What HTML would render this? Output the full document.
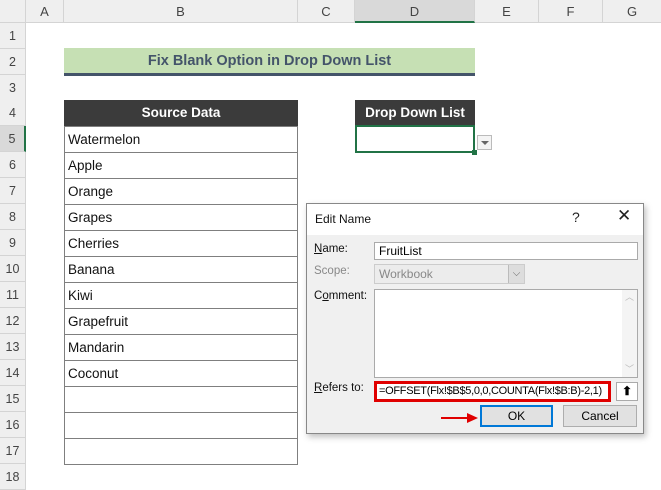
<!DOCTYPE html>
<html><head><meta charset="utf-8"><style>
*{box-sizing:border-box;margin:0;padding:0}
body{width:661px;height:490px;overflow:hidden;background:#fff;font-family:"Liberation Sans",sans-serif;position:relative}
.a{position:absolute}
.ch{top:0;height:23px;background:#efefef;border-right:1px solid #d4d4d4;border-bottom:1px solid #d4d4d4;font-size:13px;color:#444;text-align:center;line-height:23px}
.rh{left:0;width:26px;height:26px;background:#efefef;border-bottom:1px solid #d4d4d4;border-right:1px solid #d4d4d4;font-size:12.5px;color:#444;text-align:center;line-height:26px}
.cell{left:64px;width:234px;height:27px;border:1px solid #7f7f7f;font-size:13.5px;line-height:25px;padding-left:3px;color:#111}
.lbl{font-size:11.5px;color:#111}
.inp{background:#fff;border:1px solid #aaa;font-size:12px;padding-left:4px}
.btn{background:#e1e1e1;border:1px solid #adadad;font-size:12px;text-align:center}
</style></head><body>
<div class="a ch" style="left:0;width:26px"></div>
<div class="a ch" style="left:26px;width:38px">A</div>
<div class="a ch" style="left:64px;width:234px">B</div>
<div class="a ch" style="left:298px;width:57px">C</div>
<div class="a ch" style="left:355px;width:120px;background:#d9d9d9;border-bottom:2px solid #217346">D</div>
<div class="a ch" style="left:475px;width:64px">E</div>
<div class="a ch" style="left:539px;width:64px">F</div>
<div class="a ch" style="left:603px;width:58px;border-right:none">G</div>
<div class="a rh" style="top:23px">1</div>
<div class="a rh" style="top:49px">2</div>
<div class="a rh" style="top:75px">3</div>
<div class="a rh" style="top:100px">4</div>
<div class="a rh" style="top:126px;background:#d9d9d9;border-right:2px solid #217346">5</div>
<div class="a rh" style="top:152px">6</div>
<div class="a rh" style="top:178px">7</div>
<div class="a rh" style="top:204px">8</div>
<div class="a rh" style="top:230px">9</div>
<div class="a rh" style="top:256px">10</div>
<div class="a rh" style="top:282px">11</div>
<div class="a rh" style="top:308px">12</div>
<div class="a rh" style="top:334px">13</div>
<div class="a rh" style="top:360px">14</div>
<div class="a rh" style="top:386px">15</div>
<div class="a rh" style="top:412px">16</div>
<div class="a rh" style="top:438px">17</div>
<div class="a rh" style="top:464px">18</div>

<div class="a" style="left:64px;top:48px;width:411px;height:28px;background:#c6e0b4;border-bottom:3px solid #44546a;color:#44546a;font-weight:bold;font-size:14.5px;text-align:center;line-height:26px">Fix Blank Option in Drop Down List</div>

<div class="a" style="left:64px;top:100px;width:234px;height:26px;background:#3b3b3b;color:#fff;font-weight:bold;font-size:13.5px;text-align:center;line-height:26px">Source Data</div>
<div class="a" style="left:355px;top:100px;width:120px;height:26px;background:#3b3b3b;color:#fff;font-weight:bold;font-size:13.5px;text-align:center;line-height:26px">Drop Down List</div>
<div class="a" style="left:355px;top:125px;width:120px;height:28px;border:2px solid #217346"></div>
<div class="a" style="left:472px;top:150px;width:5px;height:5px;background:#217346"></div>
<div class="a" style="left:477px;top:135px;width:15px;height:15px;border:1px solid #bbb;background:#f4f4f4"><div class="a" style="left:3px;top:5px;width:0;height:0;border-left:4px solid transparent;border-right:4px solid transparent;border-top:4px solid #666"></div></div>

<div class="a cell" style="top:126px">Watermelon</div>
<div class="a cell" style="top:152px">Apple</div>
<div class="a cell" style="top:178px">Orange</div>
<div class="a cell" style="top:204px">Grapes</div>
<div class="a cell" style="top:230px">Cherries</div>
<div class="a cell" style="top:256px">Banana</div>
<div class="a cell" style="top:282px">Kiwi</div>
<div class="a cell" style="top:308px">Grapefruit</div>
<div class="a cell" style="top:334px">Mandarin</div>
<div class="a cell" style="top:360px">Coconut</div>
<div class="a cell" style="top:386px"></div>
<div class="a cell" style="top:412px"></div>
<div class="a cell" style="top:438px"></div>

<div class="a" style="left:306px;top:203px;width:338px;height:231px;background:#f0f0f0;border:1px solid #888;box-shadow:2px 3px 6px rgba(0,0,0,.25)">
<div class="a" style="left:0;top:0;width:336px;height:31px;background:#fff"></div>
<div class="a" style="left:8px;top:8px;font-size:12px;color:#111">Edit Name</div>
<div class="a" style="left:265px;top:5px;font-size:14px;color:#222">?</div>
<div class="a" style="left:310px;top:2px;font-size:17px;color:#222">✕</div>
<div class="a lbl" style="left:7px;top:39px"><u>N</u>ame:</div>
<div class="a inp" style="left:67px;top:38px;width:264px;height:18px;line-height:16px">FruitList</div>
<div class="a lbl" style="left:7px;top:61px;color:#888">Scope:</div>
<div class="a inp" style="left:67px;top:60px;width:151px;height:20px;line-height:18px;background:#ececec;border-color:#ccc;color:#888">Workbook</div>
<div class="a" style="left:201px;top:61px;width:16px;height:18px;border-left:1px solid #bbb;background:#ddd;color:#666;font-size:10px;text-align:center;line-height:18px">⌵</div>
<div class="a lbl" style="left:7px;top:86px">C<u>o</u>mment:</div>
<div class="a inp" style="left:67px;top:85px;width:264px;height:89px"></div>
<div class="a" style="left:315px;top:86px;width:15px;height:87px;background:#f4f4f4;color:#bbb;font-size:9px;text-align:center">︿<div style="position:absolute;bottom:2px;left:0;width:15px">﹀</div></div>
<div class="a lbl" style="left:7px;top:178px"><u>R</u>efers to:</div>
<div class="a" style="left:67px;top:177px;width:237px;height:21px;border:3px solid #e00000;background:#fff;font-size:11px;letter-spacing:-0.3px;line-height:15px;padding-left:2px;white-space:nowrap;overflow:hidden">=OFFSET(Flx!$B$5,0,0,COUNTA(Flx!$B:B)-2,1)</div>
<div class="a" style="left:309px;top:178px;width:22px;height:19px;background:#fff;border:1px solid #aaa;font-size:12px;font-weight:bold;text-align:center;line-height:17px">⬆</div>
<div class="a btn" style="left:173px;top:201px;width:73px;height:22px;border:2px solid #0078d7;line-height:18px">OK</div>
<div class="a btn" style="left:256px;top:201px;width:74px;height:22px;line-height:20px">Cancel</div>
<div class="a" style="left:134px;top:213px;width:28px;height:2px;background:#e00000"></div>
<div class="a" style="left:160px;top:209px;width:0;height:0;border-top:5px solid transparent;border-bottom:5px solid transparent;border-left:11px solid #e00000"></div>
</div>
</body></html>
